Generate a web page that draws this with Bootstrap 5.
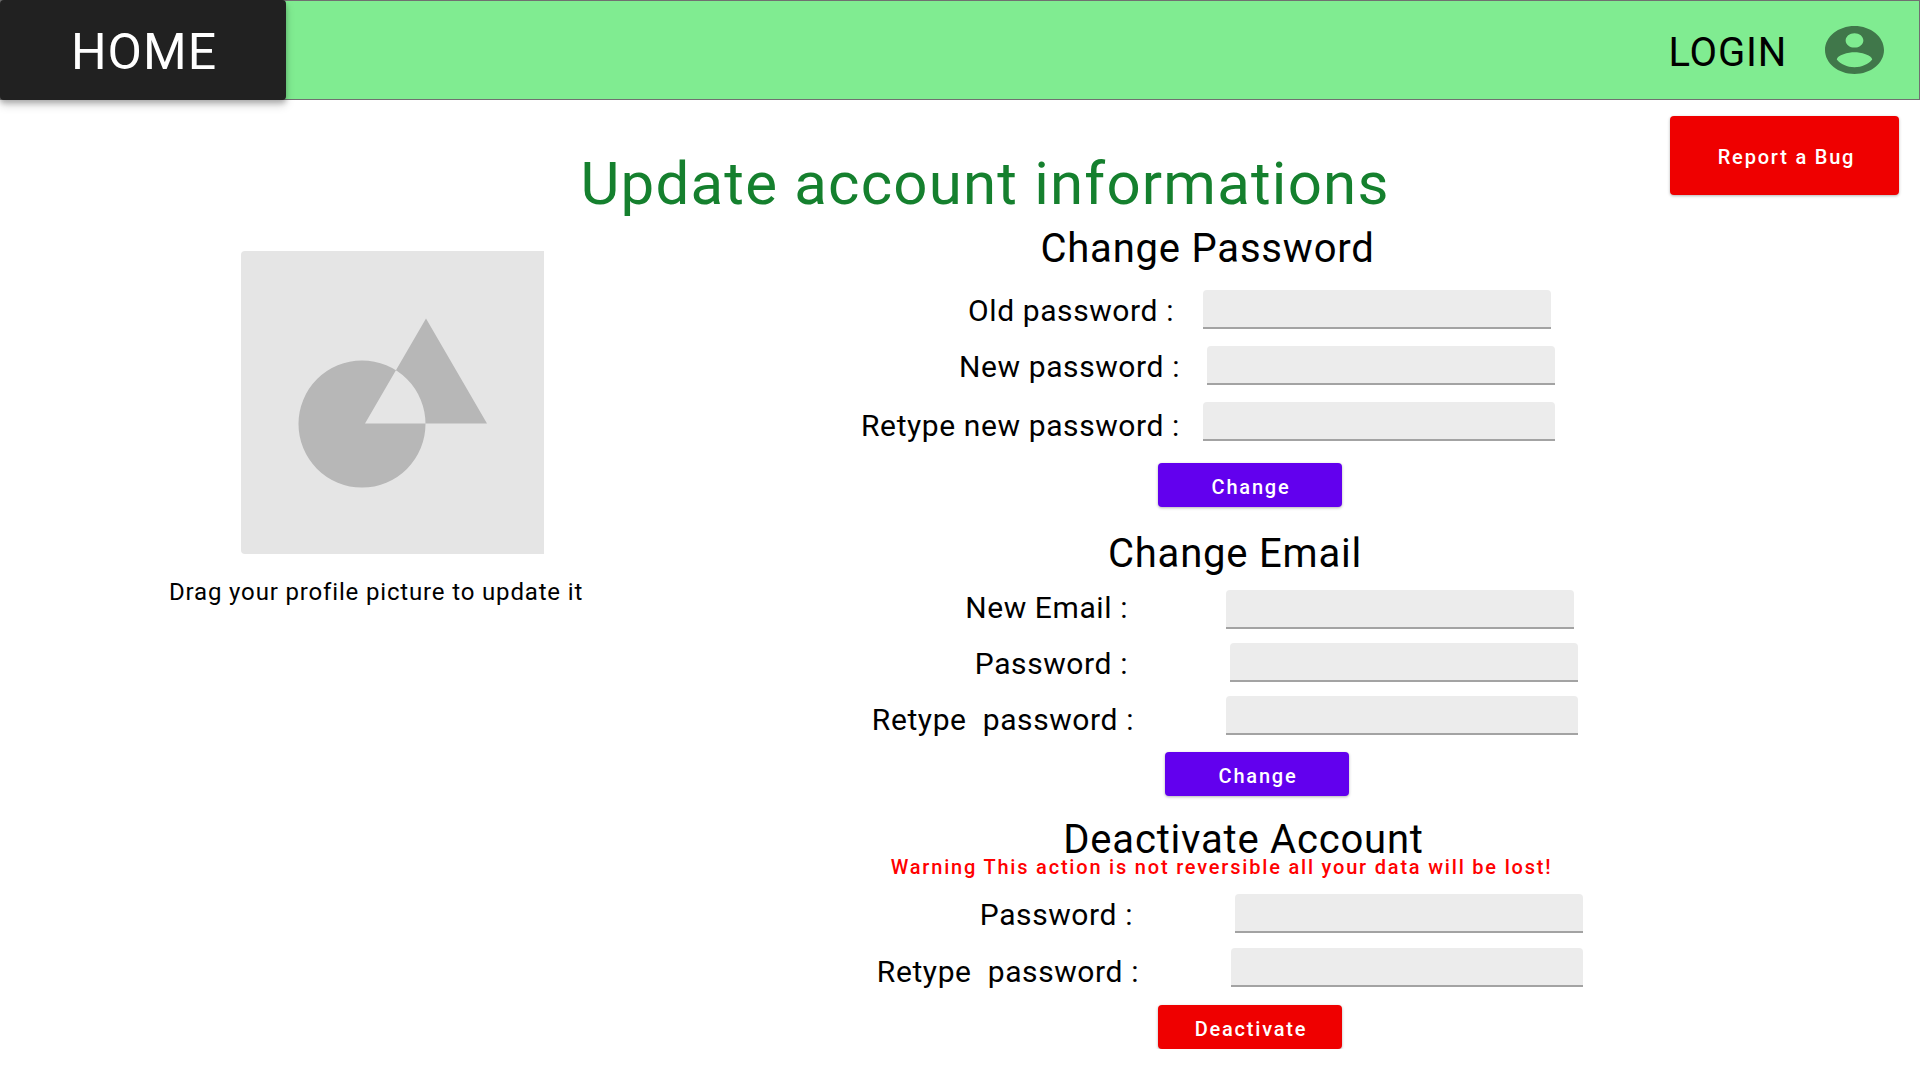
<!DOCTYPE html>
<html lang="en">
<head>
<meta charset="utf-8">
<meta name="viewport" content="width=device-width, initial-scale=1">
<title>Update account informations</title>
<link href="https://cdn.jsdelivr.net/npm/bootstrap@5.3.0/dist/css/bootstrap.min.css" rel="stylesheet">
<style>
  body { font-family: Roboto, "Liberation Sans", sans-serif; color: #000; background: #fff; }
  .home-link, .login-link, .page-title, .form-title, .fields label { letter-spacing: .02em; }
  .topbar { background: #80ec91; border: 1px solid #707070; height: 100px; }
  .home-link { width: 286px; height: 100px; margin: -1px; padding: 3px 0 0 2px; background: #212121; border-radius: 4px; font-size: 50px; line-height: 60px;
    box-shadow: 0 3px 5px rgba(0,0,0,.2), 0 5px 10px rgba(0,0,0,.18); }
  .login-link { font-size: 40px; line-height: 48px; padding-top: 5px; }
  .account { width: 59px; height: 48px; }
  .account-link { margin-right: 11px; margin-left: 38px; }
  .title-row { display: grid; grid-template-columns: 1fr auto 1fr; padding: 16px 21px 0 71px; }
  .page-title { grid-column: 2; font-size: 60px; line-height: 72px; margin: 32px 0 0; font-weight: 400; color: #15802e; }
  .action { --bs-btn-color: #fff; --bs-btn-hover-color: #fff; --bs-btn-active-color: #fff; border: 0; border-radius: 4px; color: #fff;
    font-size: 20px; line-height: 24px; font-weight: 500; letter-spacing: .09em; padding: 4px 0 0 2px; width: 184px; height: 44px;
    box-shadow: 0 1px 3px rgba(0,0,0,.3); }
  .action-red, .action-red:hover { background: #ef0000; }
  .action-violet, .action-violet:hover { background: #6200ee; }
  .action-tall { width: 229px; height: 79px; padding: 2px 0 0 4px; }
  .account-grid { display: grid; grid-template-columns: 7fr 9fr; }
  .picture-box { padding: 31px 0 0 169px; }
  .picture-drop { display: block; width: 303px; height: 303px; margin-left: 72px; }
  .picture-text { font-size: 24px; line-height: 32px; margin-top: 22px; letter-spacing: .035em; }
  .forms { padding-left: 20px; }
  .account-form { width: max-content; }
  .form-title { font-size: 40px; line-height: 48px; font-weight: 400; margin: 0; text-align: center; padding-left: var(--title-shift); }
  .fields { display: grid; grid-template-columns: var(--label-width) 352px; column-gap: var(--label-gap); }
  .fields label { font-size: 30px; line-height: 36px; height: 39px; padding-top: 3px; text-align: right; white-space: pre; }
  .fields .label-inset { padding-right: 6px; }
  .fields .label-low { padding-top: 6px; }
  .fields input { width: 100%; height: 39px; padding: 4px 12px; border: 0; border-bottom: 2px solid #a3a3a3; border-radius: 4px 4px 0 0;
    background: #ececec; font-size: 20px; }
  .fields .input-short { width: 348px; }
  .form-password { --label-width: 320px; --label-gap: 23px; --title-shift: 0px; padding-top: 5px; }
  .form-password .fields { row-gap: 17px; margin: 17px 0 22px; }
  .form-email { --label-width: 274px; --label-gap: 92px; --title-shift: 32px; padding-top: 23px; }
  .form-email .fields { row-gap: 14px; margin: 12px 0 17px; }
  .form-deactivate { --label-width: 279px; --label-gap: 92px; --title-shift: 44px; padding-top: 20px; }
  .form-deactivate .fields { row-gap: 15px; margin: 15px 0 18px; }
  .account-form .action { display: block; margin-left: 298px; }
  .form-email .action { margin-left: 305px; }
  .warning-text { font-size: 20px; line-height: 24px; font-weight: 500; letter-spacing: .09em; color: #ff0000; margin: -9px 0 0; text-align: center; }
</style>
</head>
<body>
<header>
  <nav class="topbar d-flex align-items-center justify-content-between">
    <a class="home-link d-flex align-items-center justify-content-center text-white text-decoration-none" href="#">HOME</a>
    <div class="d-flex align-items-center pe-4">
      <a class="login-link text-black text-decoration-none" href="#">LOGIN</a>
      <a class="account-link d-flex" href="#" aria-label="Account">
        <svg class="account" viewBox="2 2 20 20" preserveAspectRatio="none" fill="#40774a" aria-hidden="true"><path d="M12 2C6.480 2 2 6.480 2 12s4.480 10 10 10 10-4.480 10-10S17.520 2 12 2zm0 3c1.660 0 3 1.340 3 3s-1.340 3-3 3-3-1.340-3-3 1.340-3 3-3zm0 14.200c-2.500 0-4.710-1.280-6-3.220.030-1.990 4-3.080 6-3.080 1.990 0 5.970 1.090 6 3.080-1.290 1.940-3.500 3.220-6 3.220z"/></svg>
      </a>
    </div>
  </nav>
</header>
<main>
  <div class="title-row">
    <h1 class="page-title">Update account informations</h1>
    <div class="text-end"><button type="button" class="btn action action-red action-tall">Report a Bug</button></div>
  </div>
  <div class="account-grid">
    <section class="picture-box">
      <svg class="picture-drop" viewBox="0 0 303 303" role="img" aria-label="Profile picture">
        <path d="M4 0H303V303H4Q0 303 0 299V4Q0 0 4 0Z" fill="#e5e5e5"/>
        <path fill="#b7b7b7" fill-rule="evenodd" d="M57.500 173a63.500 63.500 0 1 0 127 0a63.500 63.500 0 1 0 -127 0ZM185 67.500L246 172.500H124Z"/>
      </svg>
      <p class="picture-text mb-0">Drag your profile picture to update it</p>
    </section>
    <div class="forms">
      <form class="account-form form-password">
        <h2 class="form-title">Change Password</h2>
        <div class="fields">
          <label class="label-inset" for="old-password">Old password :</label>
          <input class="input-short" type="password" id="old-password">
          <label for="new-password">New password :</label>
          <input class="input-short ms-auto" type="password" id="new-password">
          <label class="label-low" for="new-password-again">Retype new password :</label>
          <input type="password" id="new-password-again">
        </div>
        <button type="button" class="btn action action-violet">Change</button>
      </form>
      <form class="account-form form-email">
        <h2 class="form-title">Change Email</h2>
        <div class="fields">
          <label class="label-inset pt-0" for="new-email">New Email :</label>
          <input class="input-short" type="email" id="new-email">
          <label class="label-inset" for="email-password">Password :</label>
          <input class="input-short ms-auto" type="password" id="email-password">
          <label class="label-low" for="email-password-again">Retype  password :</label>
          <input type="password" id="email-password-again">
        </div>
        <button type="button" class="btn action action-violet">Change</button>
      </form>
      <form class="account-form form-deactivate">
        <h2 class="form-title">Deactivate Account</h2>
        <p class="warning-text">Warning This action is not reversible all your data will be lost!</p>
        <div class="fields">
          <label class="label-inset" for="deactivate-password">Password :</label>
          <input class="input-short ms-auto" type="password" id="deactivate-password">
          <label class="label-low" for="deactivate-password-again">Retype  password :</label>
          <input type="password" id="deactivate-password-again">
        </div>
        <button type="button" class="btn action action-red">Deactivate</button>
      </form>
    </div>
  </div>
</main>
<script src="https://cdn.jsdelivr.net/npm/bootstrap@5.3.0/dist/js/bootstrap.bundle.min.js"></script>
</body>
</html>
